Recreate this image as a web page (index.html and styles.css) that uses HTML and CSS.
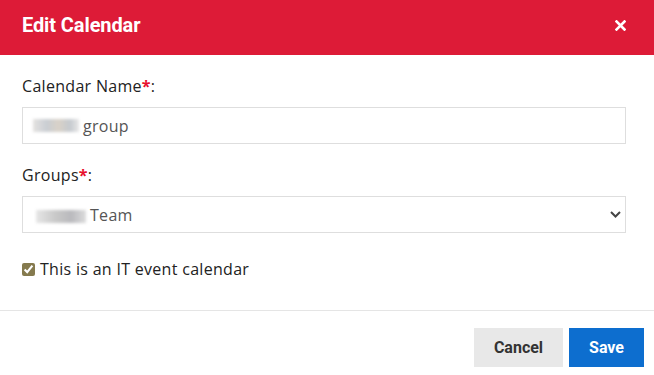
FILE: index.html
```html
<!DOCTYPE html>
<html lang="en">
  <head>
    <meta charset="UTF-8" />
    <meta name="viewport" content="width=device-width, initial-scale=1.0" />
    <title>Edit Calendar</title>
    <link rel="stylesheet" href="styles.css">
  </head>
  <body>
    <div class="modal">
      <div class="modal-header">
        <h3>Edit Calendar</h3>
        <div class="modal-close">
          <svg width="11" height="11" viewBox="0 0 11 11">
            <path d="M1.5 1.5 L9.5 9.5 M9.5 1.5 L1.5 9.5" stroke="#fff" stroke-width="2.6" stroke-linecap="square" />
          </svg>
        </div>
      </div>

      <div class="modal-body">
        <div class="field">
          <label>Calendar Name<span class="req">*</span>:</label>
          <div class="text-input">
            <span class="blur blur-name"></span>group
          </div>
        </div>

        <div class="field">
          <label>Groups<span class="req">*</span>:</label>
          <div class="text-input select">
            <span><span class="blur blur-group"></span>Team</span>
            <svg width="11" height="7" viewBox="0 0 11 7">
              <path d="M1 1 L5.5 5.5 L10 1" fill="none" stroke="#444" stroke-width="2" />
            </svg>
          </div>
        </div>

        <label class="check">
          <input type="checkbox" checked />
          <span>This is an IT event calendar</span>
        </label>
      </div>

      <div class="modal-footer">
        <button class="btn btn-cancel">Cancel</button>
        <button class="btn btn-save">Save</button>
      </div>
    </div>
  </body>
</html>
```

FILE: styles.css
```css
body {
  margin: 0;
  padding: 0;
  font-family: "Open Sans", "Liberation Sans", sans-serif;
  background-color: white;
  color: #1c1c1e;
}

.modal {
  width: 654px;
  height: 375px;
  background-color: white;
}

.modal-header {
  display: flex;
  justify-content: space-between;
  align-items: flex-start;
  height: 55px;
  padding: 0 28px 0 22px;
  box-sizing: border-box;
  background-color: #dd1b37;
  color: white;
}

.modal-header h3 {
  margin: 0;
  padding-top: 13px;
  font-family: Roboto, sans-serif;
  font-size: 20px;
  font-weight: 700;
  letter-spacing: -0.1px;
}

.modal-close {
  padding-top: 14px;
  cursor: pointer;
}

.modal-body {
  padding: 21px 28px 0 22px;
  height: 255px;
  box-sizing: border-box;
}

.field {
  margin-bottom: 21px;
}

.field label {
  display: block;
  font-size: 16px;
  line-height: 21px;
  letter-spacing: 0.3px;
  margin-bottom: 10px;
  color: #222;
}

.req {
  color: #e8112d;
  font-weight: 700;
}

.text-input {
  display: flex;
  align-items: center;
  height: 37px;
  box-sizing: border-box;
  padding: 0 10px;
  border: 1px solid #dedede;
  font-size: 16px;
  letter-spacing: 0.3px;
  color: #555;
}

.select {
  justify-content: space-between;
  padding-right: 4px;
}

.blur {
  display: inline-block;
  height: 13px;
  margin-right: 4px;
  vertical-align: middle;
  filter: blur(1.5px);
  background: linear-gradient(90deg, #e4e2e0, #c9cdd2 30%, #d9d2c8 55%, #c5c9ce 80%, #e8e8e8);
}

.blur-name {
  width: 46px;
}

.blur-group {
  width: 50px;
  margin-left: 3px;
  background: linear-gradient(90deg, #e6e6e6, #c8c8c8 40%, #b9b9bd 70%, #dcdcdc);
}

.check {
  display: flex;
  align-items: center;
  gap: 5px;
  margin-top: 25px;
  font-size: 16px;
  letter-spacing: 0.3px;
  color: #222;
}

.check input {
  margin: 0;
  width: 13px;
  height: 13px;
  accent-color: #857a4e;
}

.modal-footer {
  display: flex;
  justify-content: flex-end;
  gap: 6px;
  height: 65px;
  box-sizing: border-box;
  padding: 17px 10px 0 0;
  border-top: 1px solid #e5e5e5;
}

.btn {
  height: 39px;
  border: none;
  font-family: Roboto, sans-serif;
  font-size: 16px;
  font-weight: 700;
  cursor: pointer;
}

.btn-cancel {
  width: 89px;
  background-color: #e8e8e8;
  color: #333;
}

.btn-save {
  width: 75px;
  background-color: #0d6ecf;
  color: white;
}
```
